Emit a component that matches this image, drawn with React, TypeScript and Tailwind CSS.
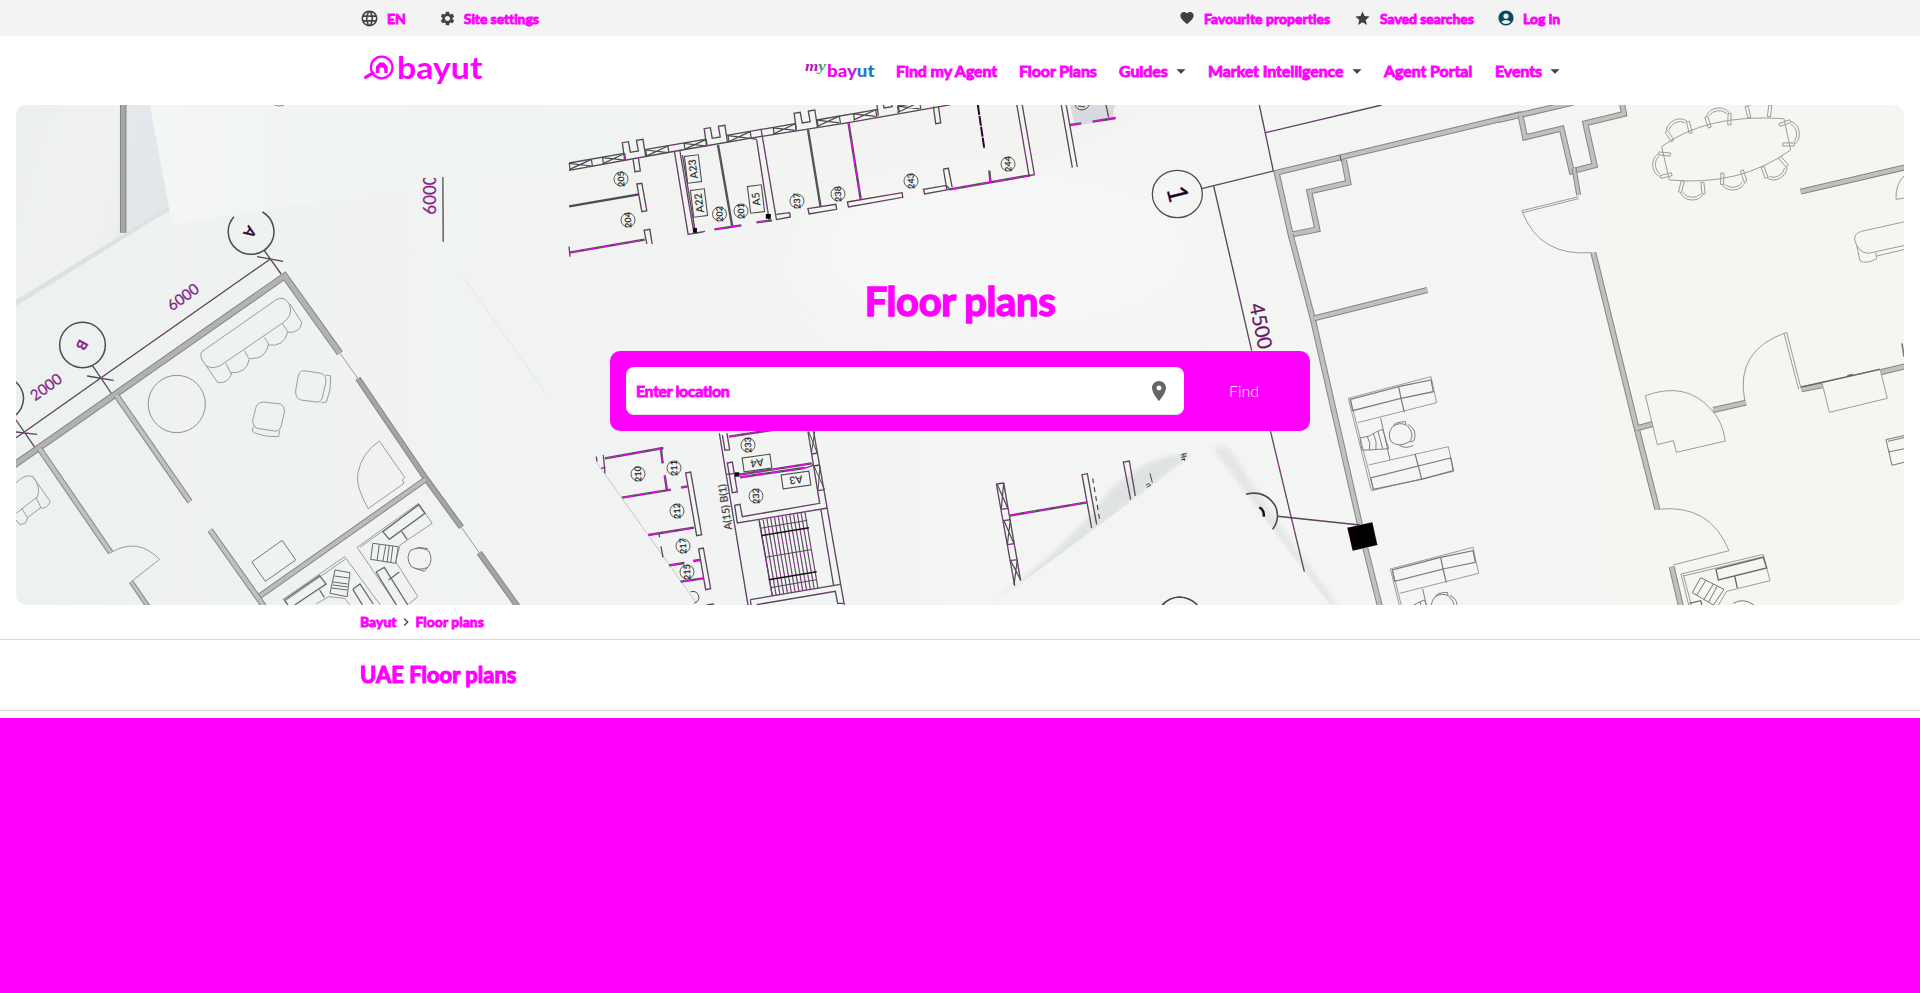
import React from "react";
import {
  MdAccountCircle,
  MdArrowDropDown,
  MdChevronRight,
  MdFavorite,
  MdLanguage,
  MdLocationOn,
  MdSettings,
  MdStar,
} from "react-icons/md";

const INK = "#4a4d4c";
const PINK = "#ff00ff";

/* ---------- drawing helpers ---------- */

function Wall({ d, w = 6, fill = "#bfc1bf" }: { d: string; w?: number; fill?: string }) {
  return (
    <>
      <path d={d} stroke="#858785" strokeWidth={w} />
      <path d={d} stroke={fill} strokeWidth={w - 2} />
    </>
  );
}

function Dim({ d, w = 1.3, dash = "1.5 7" }: { d: string; w?: number; dash?: string }) {
  return (
    <>
      <path d={d} stroke={INK} strokeWidth={w} />
      <path d={d} stroke={PINK} strokeWidth={w * 0.8} strokeDasharray={dash} opacity="0.6" />
    </>
  );
}

function Hot({ d }: { d: string }) {
  return (
    <>
      <path d={d} stroke={INK} strokeWidth={2.4} />
      <path d={d} stroke={PINK} strokeWidth={1.1} strokeDasharray="12 3" />
    </>
  );
}

function Thin({ d, c = "#999d9b", w = 1, fill = "none" }: { d: string; c?: string; w?: number; fill?: string }) {
  return <path d={d} stroke={c} strokeWidth={w} fill={fill} />;
}

function Room({ x, y, t, a = -92 }: { x: number; y: number; t: string; a?: number }) {
  return (
    <g transform={`translate(${x} ${y}) rotate(${a})`}>
      <circle r="7" stroke={INK} strokeWidth="0.9" />
      <text textAnchor="middle" y="3.2" fontSize="9" fill="#333" stroke="none">
        {t}
      </text>
    </g>
  );
}

function Tag({ x, y, t, a, w }: { x: number; y: number; t: string; a: number; w: number }) {
  return (
    <g transform={`translate(${x} ${y}) rotate(${a})`}>
      <rect x={-w / 2} y="-7" width={w} height="14" stroke={INK} strokeWidth="1.1" />
      <text textAnchor="middle" y="3.8" fontSize="10.5" fill="#333" stroke="none" fontWeight="600">
        {t}
      </text>
    </g>
  );
}

function Label({ x, y, t, a, s, c = "#a010a0", b = 400 }: { x: number; y: number; t: string; a: number; s: number; c?: string; b?: number }) {
  return (
    <text transform={`translate(${x} ${y}) rotate(${a})`} textAnchor="middle" y={s * 0.36} fontSize={s} fontWeight={b} fill={c} stroke={INK} strokeWidth="0.25">
      {t}
    </text>
  );
}

function Seat({ x, y, r }: { x: number; y: number; r: number }) {
  return (
    <g transform={`translate(${x} ${y}) rotate(${r})`}>
      <Thin d="M-34,26 L-40,-8 L-31,-10 L-25,24 Z M34,26 L40,-8 L31,-10 L25,24 Z M-34,-12 Q-22,-30 0,-30 Q22,-30 34,-12 M-27,-10 Q-16,-22 0,-22 Q16,-22 27,-10" />
    </g>
  );
}

function Desk({ x, y }: { x: number; y: number }) {
  return (
    <g transform={`translate(${x} ${y})`}>
      <Thin d="M-3,5 L245,-60 L262,18 L25,78 M-3,5 L66,282 L313,224 L297,150 L58,205 M3,8 L72,278" />
      <Thin d="M10,42 L3,8 L148,-30 L155,5 Z M155,5 L252,-15 L245,-50 L148,-30 M155,5 L165,46" c="#777b79" w={1.2} />
      <Thin d="M72,278 L64,244 L207,208 L217,248 Z M207,208 L304,184 L312,222 L217,248 M207,208 L197,172" c="#777b79" w={1.2} />
      <Thin d="M94,64 L122,190 M32,124 L60,118 L80,106 L100,98 L118,156 L60,160 L38,160 Z M54,120 Q66,140 60,160 M72,110 Q84,136 80,158 M86,104 L100,156" c="#808080" />
      <Thin d="M130,90 Q150,74 172,86 Q198,110 182,134 Q150,154 126,136 Q112,112 130,90 M132,88 Q136,76 168,75 L170,84 M150,146 Q170,158 192,146 M176,84 Q206,98 194,132 L182,136" c="#808080" />
    </g>
  );
}

/* ---------- drawing sections ---------- */

function PaperLayers() {
  return (
    <g stroke="none">
      <polygon points="16,105 153,105 171,205 16,303" fill="url(#sheetLeft)" />
      <polygon points="16,300 171,205 171,209 16,306" fill="#dde1e0" />
      <polygon points="125,105 150,105 170,212 127,232" fill="#dfe3e8" opacity="0.6" />
      <polygon points="150,105 700,105 640,150 172,225" fill="url(#sheetTop)" />
      <polygon points="450,255 490,255 547,395" fill="#f0f2f1" opacity="0.8" />
      <path d="M462 275 L547 395" stroke="#e2e6e5" strokeWidth="1" />
      <polygon points="569,165 900,105 1135,105 1135,118 1020,177 569,257" fill="#f2f2f0" opacity="0.8" />
      <ellipse cx="1000" cy="250" rx="200" ry="80" fill="#f8f8f8" opacity="0.7" filter="url(#wide)" />
      <polygon points="1070,105 1115,105 1112,120 1075,126" fill="#d9dadf" />
      <path d="M990 604 Q1070 545 1110 490 Q1150 452 1192 455 Q1130 502 1060 560 Z" fill="#d7dbda" opacity="0.7" filter="url(#soft)" />
      <path d="M1212 448 L1228 446 L1290 540 L1338 605 L1328 605 L1260 512 Z" fill="#dde0df" opacity="0.7" filter="url(#soft)" />
      <polygon points="992,605 1190,458 1215,455 1330,605" fill="#f3f5f5" />
    </g>
  );
}

function LeftRooms() {
  return (
    <g transform="translate(0 100) scale(0.357143 0.333333)">
      <Wall d="M345,10 L345,398" w={6.5} fill="#a6a7aa" />
      <Dim d="M1240,232 L1241,425" dash="1 12" />
      <Dim d="M45,1013 L67,997 L282,834 L757,477" />
      <Dim d="M739,450 L787,522 M720,470 L793,484 M259,797 L313,882 M244,828 L318,841 M45,960 L98,1043 M45,996 L104,1003" dash="2 12" />
      <path d="M735,336 A64,68 0 1 1 655,350" stroke={INK} strokeWidth="1.5" />
      <ellipse cx="231" cy="735" rx="64" ry="68" stroke={INK} strokeWidth="1.5" />
      <path d="M45,846 Q66,868 66,895 Q65,925 45,945" stroke={INK} strokeWidth="1.5" />
      <Wall d="M40,1095 L797,528 L952,760" w={7} fill="#b0b3b1" />
      <Wall d="M1002,835 L1192,1135 L1292,1282" fill="#a3a6a4" />
      <Wall d="M1342,1358 L1450,1520" fill="#a3a6a4" />
      <Wall d="M1192,1138 L725,1490" fill="#b9bcba" />
      <Thin d="M952,760 L1002,835 M1292,1282 L1342,1358" />
      <Wall d="M325,885 L532,1205" />
      <Wall d="M110,1045 L310,1358" />
      <Wall d="M588,1290 L740,1520" />
      <Wall d="M367,1445 L415,1520" w={5} />
      <Thin d="M310,1358 Q385,1310 447,1378 L367,1445" />
      <Thin d="M565,755 L775,598 Q800,586 812,618 Q820,650 790,670 L615,798 Q592,808 577,797 Q555,768 565,755 Z" />
      <Thin d="M577,797 L610,848 Q640,850 648,822 L632,790 M645,818 Q690,822 698,778 L684,752 M700,776 Q745,778 752,732 L740,712 M752,735 Q795,742 806,695 L790,670 M806,697 Q840,700 845,668 L812,612" />
      <ellipse cx="495" cy="912" rx="80" ry="86" stroke="#8f9391" />
      <Thin d="M850,812 L900,820 Q915,825 912,850 L902,895 Q898,908 885,906 L842,900 Q826,895 828,870 L835,830 Q838,812 850,812 Z M912,825 L926,828 Q928,870 914,906 L900,908" />
      <Thin d="M738,906 L785,912 Q798,918 796,938 L787,980 Q782,994 768,993 L720,985 Q706,978 708,958 L718,918 Q724,906 738,906 Z M710,980 Q702,995 715,1000 Q745,1012 780,1010 L783,992" />
      <Thin d="M1062,1023 L1133,1132 L1127,1140 L1131,1150 L1031,1226 Q995,1160 1002,1120 Q1012,1060 1062,1023 Z" />
      <Thin d="M705,1386 L790,1321 L828,1380 L743,1444 Z" c="#777" />
      <Thin d="M45,1148 Q72,1120 92,1130 Q115,1160 105,1190 L45,1240 M92,1130 L141,1205 Q130,1228 115,1224 L102,1194 M60,1224 L77,1253 L115,1222 M77,1253 Q75,1275 55,1273 L45,1260" />
      <Thin d="M1000,1342 L1172,1210 L1210,1270 L1120,1335 L1108,1385 L1170,1490 L1145,1512 M1000,1342 L1110,1515 M1008,1342 L1170,1218" />
      <Thin d="M1072,1295 L1172,1214 L1190,1240 L1090,1318 Z M1053,1416 L1076,1402 L1142,1515 M1053,1416 L1110,1515 M1125,1295 L1140,1318 M1088,1440 L1118,1416" c="#666a68" w={1.3} />
      <Thin d="M1044,1330 L1115,1340 L1108,1390 L1038,1378 Z M1062,1334 L1056,1380 M1080,1336 L1072,1384 M1090,1336 L1084,1386 M1100,1338 L1094,1388" c="#666a68" />
      <Thin d="M1150,1350 Q1175,1338 1200,1352 Q1215,1380 1198,1402 Q1170,1415 1150,1398 Q1135,1372 1150,1350 M1165,1348 L1170,1342 L1198,1346 M1160,1404 L1188,1414 L1196,1404" c="#777" />
      <Thin d="M790,1500 L965,1370 L1065,1515 M800,1502 L966,1378 M885,1512 L920,1490 L965,1495 L980,1515" />
      <Thin d="M796,1500 L895,1427 L913,1452 L825,1515 M796,1500 L806,1515 M988,1468 L1008,1452 L1045,1512 M988,1468 L1015,1515 M895,1470 L908,1492" c="#666a68" w={1.3} />
      <Thin d="M938,1410 L980,1418 L972,1490 L924,1480 Z M936,1428 L976,1434 M932,1446 L974,1452 M928,1464 L972,1470 M932,1455 L974,1461" c="#666a68" />
      <path d="M768,15 Q782,21 796,15" stroke="#888" />
    </g>
  );
}

const BRACKETS: [number, number][] = [[0, 0], [214, -42], [449, -88], [663, -133]];
const HATCHES = [50, 137, 250, 350, 465, 583, 698, 793, 908];

function TopPlan() {
  return (
    <g transform="translate(550 100) scale(0.382667 0.333333)">
      <Dim d="M50,189 L190,161 M248,149 L405,118 M462,106 L640,71 M697,60 L858,28 M910,18 L945,12 M50,211 L315,156 L345,150 L548,110 L780,68 L1048,14" dash="2 12" />
      {HATCHES.map((x) => (
        <Thin
          key={x}
          d={`M${x},${200 - x * 0.2} L${x + 58},${208 - x * 0.2} M${x},${219 - x * 0.2} L${x + 58},${188 - x * 0.2} M${x + 58},${187 - x * 0.2} L${x + 61},${209 - x * 0.2} M${x},${199 - x * 0.2} L${x + 3},${220 - x * 0.2}`}
          c={INK}
          w={1.2}
        />
      ))}
      {BRACKETS.map(([x, y]) => (
        <g key={x} transform={`translate(${x} ${y})`}>
          <Dim d="M195,180 L189,128 L205,125 L210,157 L231,153 L226,121 L243,118 L250,170" dash="2 14" />
        </g>
      ))}
      <Dim d="M217,178 L222,215 L236,213 L231,174 M1002,20 L1008,71 L1021,69 L1015,18" dash="1 9" />
      <Dim d="M227,252 L240,250 L253,332 L240,335 Z M253,432 L246,391 L261,388 L267,432" dash="2 12" />
      <path d="M50,319 L232,283" stroke={INK} strokeWidth="2.4" />
      <path d="M439,135 L476,378 M674,88 L707,320" stroke="#555" strokeWidth="2.4" />
      <Hot d="M50,458 L247,419 M780,68 L812,298 M430,388 L500,376 M540,367 L580,361 M1045,268 L1255,226 M1148,212 L1151,246 M1358,75 L1388,70 M1418,65 L1478,54" />
      <path d="M1118,15 L1135,146" stroke="#2d002d" strokeWidth="2" strokeDasharray="10 1" />
      <Dim d="M50,440 L52,470 M325,153 L361,403 L383,399 M339,150 L376,398 M346,165 L379,390 M383,399 L405,394 M540,120 L573,362 M552,90 L592,360 M540,118 L524,115" dash="2 5" />
      <path d="M374,384 l10,0 l0,14 l-10,0 z M564,342 l13,0 l0,14 l-13,0 z" fill="#000" />
      <Dim d="M592,343 L626,338 L628,351 L592,359 M674,326 L747,313 L749,328 L677,342 Z M777,306 L920,278 L922,292 L780,321 Z M976,268 L1036,256 L1045,268 L979,282 Z M1028,207 L1041,205 L1051,262 M1028,207 L1037,268" dash="2 9" />
      <Dim d="M1220,15 L1252,227 L1266,224 L1234,15 M1336,15 L1365,203 M1349,15 L1378,201 M1453,15 L1460,52" dash="2 9" />
    </g>
  );
}

function BottomPlan() {
  return (
    <g transform="translate(580 340) scale(0.333333)">
      <Thin d="M50,368 L350,790" c="#c4c8c6" />
      <Hot d="M75,355 L250,324 M126,473 L273,449 M205,585 L342,563 M267,676 L313,669 M302,725 L370,715 M243,328 L248,370 M254,406 L261,452 M303,443 L322,439 M340,663 L360,660 M447,290 L590,268" />
      <Dim d="M49,350 L51,365 M70,345 L75,400 M64,385 L77,382 M317,399 L332,396 L365,584 L350,587 Z M356,627 L370,624 L392,746 L377,749 Z M243,620 L249,652 M237,582 L239,592" dash="2 9" />
      <Dim d="M418,280 L504,795 M427,285 L435,331 L449,329 L441,280 M442,369 L457,366 L472,456 L457,458 Z M441,403 L466,400" dash="2 5" />
      <Hot d="M478,404 L695,370 M480,412 L672,384" />
      <path d="M465,397 h13 v13 h-13 z" fill="#000" />
      <Dim d="M684,275 L719,490 L487,530 L480,493 L464,496 L472,549 L743,504 M700,270 L793,795 M694,342 L714,339 M700,378 L720,375 M714,452 L734,449 M672,385 L695,378 L700,373" dash="2 6" />
      <Thin d="M686,275 L712,340 M704,275 L694,342 M702,378 L734,450 M720,378 L714,452" c={INK} />
      <Dim d="M723,510 L761,738 M537,541 L577,768 M511,779 L781,733 M530,794 L766,754 L773,790 L790,790 M511,779 L513,795 M380,795 L402,792" dash="2 7" />
      {[0, 1, 2, 3, 4, 5, 6, 7, 8, 9, 10, 11, 12].map((i) => (
        <Dim key={i} d={`M${538 + i * 11.4},${541 - i * 2} L${577 + i * 11.4},${768 - i * 2}`} dash="3 5" w={1.1} />
      ))}
      <Thin d="M540,565 L682,541 M556,652 L693,629 M572,743 L710,719" c={INK} />
      <path d="M544,587 L687,563 M566,719 L710,695" stroke="#111" strokeWidth="1.5" />
      <path d="M332,755 Q355,750 357,775 Q355,785 343,790" stroke={INK} />
    </g>
  );
}

function FoldPlan() {
  return (
    <g transform="translate(960 340) scale(0.333333)">
      <Dim d="M109,432 L131,429 L182,722 M109,432 L164,737 M122,508 L145,505 M130,542 L153,539 M142,614 L164,611 M150,662 L172,659" dash="2 5" />
      <Thin d="M112,434 L143,504 M131,430 L124,506 M132,542 L162,611 M151,540 L142,614 M152,662 L182,720 M172,660 L162,734" c={INK} w={1.2} />
      <Hot d="M148,527 L381,487" />
      <Dim d="M395,564 L366,404 L382,401 L410,553 M512,479 L490,366 L508,363 L526,468" dash="2 8" />
      <path d="M398,415 L420,545" stroke={INK} strokeWidth="1.2" strokeDasharray="5 4" />
      <path d="M570,400 L577,428 M558,435 Q570,428 572,436 L560,442" stroke={INK} />
      <path d="M662,345 L680,340 M664,352 L680,348 M664,360 L674,356 M670,340 L674,362" stroke={INK} strokeWidth="1.2" />
      <path d="M606,795 Q628,772 658,771 Q690,772 712,795" stroke={INK} strokeWidth="1.3" />
    </g>
  );
}

function CentreRightPlan() {
  return (
    <g transform="translate(1120 100) scale(0.333333)">
      <Dim d="M418,15 L460,213 L245,266 M437,98 L785,15 M281,258 L395,752 M451,992 L553,1415" />
      <ellipse cx="172" cy="282" rx="75" ry="71" stroke={INK} strokeWidth="1.3" />
      <Wall d="M1205,42 L470,218 L512,404 L592,388 L568,275 L685,248 L672,180" />
      <Wall d="M512,404 L578,655 L720,1275" />
      <Wall d="M582,655 L922,570" />
      <Wall d="M736,1345 L780,1520" />
      <Thin d="M660,165 L664,185" c="#555" />
      <Dim d="M472,1249 L720,1275" w={1.5} />
      <path d="M378,1183 Q435,1168 466,1218 Q482,1256 458,1288" stroke={INK} strokeWidth="1.6" />
      <path d="M418,1222 Q434,1230 431,1250" stroke="#111" strokeWidth="2.4" />
      <path d="M682,1283 L757,1267 L772,1335 L698,1352 Z" fill="#000" stroke={PINK} strokeWidth="0.8" strokeDasharray="1 5" />
      <Desk x={688} y={890} />
      <Desk x={814} y={1402} />
      <path d="M129,1515 Q148,1492 180,1491 Q212,1494 232,1515" stroke={INK} strokeWidth="1.2" />
    </g>
  );
}

function RightPlan() {
  return (
    <g transform="translate(1500 100) scale(0.333333)">
      <Wall d="M-5,60 L220,8" />
      <Wall d="M62,48 L75,112 L185,86 L215,214 L284,196 L256,70 L372,42 L366,10" />
      <Wall d="M222,204 L236,285" w={5} />
      <Thin d="M236,290 L66,332 L68,338 L236,296 M68,338 Q120,470 275,458" />
      <Wall d="M280,458 L410,985 L458,972" />
      <Wall d="M412,992 L472,1228" />
      <Thin d="M472,1228 Q630,1210 687,1352 L520,1395" />
      <Wall d="M515,1400 L543,1520" />
      <Thin d="M485,140 Q620,40 852,56 L872,150 Q720,260 508,240 Z" />
      <Seat x={535} y={88} r={-24} />
      <Seat x={655} y={54} r={-8} />
      <Seat x={776} y={26} r={-3} />
      <Seat x={868} y={100} r={80} />
      <Seat x={826} y={208} r={150} />
      <Seat x={700} y={240} r={172} />
      <Seat x={576} y={270} r={184} />
      <Seat x={488} y={195} r={-94} />
      <Wall d="M902,275 L1215,202" />
      <Thin d="M1215,365 L1085,394 Q1062,400 1064,420 Q1074,458 1105,460 L1215,436 M1070,436 L1080,482 Q1098,494 1130,476 L1127,458 M1130,468 L1215,448 M1215,225 Q1186,250 1188,298 L1215,294" />
      <Thin d="M436,887 Q560,842 635,930 Q668,965 676,1023 L529,1057 L520,1022 L472,1034 Z" />
      <Wall d="M640,930 L738,908" />
      <Thin d="M734,900 Q705,750 860,697 L903,865 M852,700 L896,868" />
      <Wall d="M904,868 L966,856" />
      <Thin d="M966,848 L1140,807 L1162,895 L988,937 Z" />
      <path d="M904,861 L1140,808 M1042,827 L1058,823" stroke="#666" strokeWidth="1.3" />
      <Wall d="M1144,816 L1215,799" />
      <path d="M1206,730 L1212,770" stroke="#777" strokeWidth="1.6" />
      <Thin d="M1215,1006 L1158,1019 L1176,1096 L1215,1086 M1165,1056 L1215,1046 M1215,1012 L1164,1024" c="#777" />
      <Thin d="M543,1422 L790,1363 L810,1442 L680,1474 L655,1515 M543,1422 L566,1515 M550,1424 L574,1515 M550,1428 L790,1370" />
      <Thin d="M648,1408 L790,1372 L800,1404 L655,1440 Z M704,1428 L712,1464 M568,1510 L602,1502 L606,1515" c="#666a68" w={1.3} />
      <Thin d="M602,1433 L672,1468 L640,1515 L577,1478 Z M618,1440 L590,1486 M640,1452 L612,1498 M652,1458 L626,1506 M700,1510 Q730,1492 762,1515" c="#777" />
    </g>
  );
}

function Blueprint() {
  return (
    <svg
      viewBox="16 105 1888 500"
      className="col-start-1 row-start-1 h-[500px] w-full font-['Lato',sans-serif] [&_path]:[vector-effect:non-scaling-stroke] [&_ellipse]:[vector-effect:non-scaling-stroke]"
      fill="none"
    >
      <defs>
        <linearGradient id="sheetLeft" x1="0" y1="0" x2="1" y2="0.4">
          <stop offset="0" stopColor="#eceff0" />
          <stop offset="0.6" stopColor="#f0f1f3" />
          <stop offset="1" stopColor="#e6eaec" />
        </linearGradient>
        <linearGradient id="sheetTop" x1="0" y1="0" x2="1" y2="0">
          <stop offset="0" stopColor="#f3f6f5" />
          <stop offset="0.5" stopColor="#eff3f2" />
          <stop offset="1" stopColor="#eff3f2" stopOpacity="0" />
        </linearGradient>
        <filter id="soft">
          <feGaussianBlur stdDeviation="2.5" />
        </filter>
        <filter id="wide" x="-30%" y="-50%" width="160%" height="200%">
          <feGaussianBlur stdDeviation="30" />
        </filter>
      </defs>
      <PaperLayers />
      <LeftRooms />
      <TopPlan />
      <BottomPlan />
      <FoldPlan />
      <CentreRightPlan />
      <RightPlan />
      <Room x={621} y={179} t="205" />
      <Room x={628} y={220} t="204" />
      <Room x={719.5} y={214} t="202" />
      <Room x={741} y={211} t="201" />
      <Room x={797} y={201} t="237" />
      <Room x={838} y={194} t="238" />
      <Room x={911} y={181} t="243" />
      <Room x={1008} y={164} t="244" />
      <path d="M1075 105 Q1077 110 1082 110 Q1088 109 1089 105 M1078 106 L1085 107" stroke={INK} />
      <Room x={748} y={445} t="233" />
      <Room x={638} y={474} t="210" />
      <Room x={674} y={468} t="211" />
      <Room x={677} y={511} t="212" />
      <Room x={683} y={546} t="217" />
      <Room x={687} y={572} t="215" />
      <Room x={756} y={496} t="232" />
      <Tag x={693} y={169} t="A23" a={-97} w={27} />
      <Tag x={699} y={203} t="A22" a={-97} w={27} />
      <Tag x={756} y={199} t="A5" a={-97} w={27} />
      <Tag x={757} y={463} t="A4" a={172} w={28} />
      <Tag x={796} y={480} t="A3" a={172} w={28} />
      <Label x={725} y={507} t="A(15) B(1)" a={-98} s={10.5} c="#333" />
      <Label x={183} y={297} t="6000" a={-36} s={15} />
      <Label x={46} y={387} t="2000" a={-36} s={15} />
      <svg x="415" y="178" width="30" height="50" overflow="hidden">
        <Label x={15} y={17} t="6000" a={-90} s={17} />
      </svg>
      <Label x={250} y={232} t="A" a={124} s={15} b={700} c="#300030" />
      <Label x={82} y={345} t="B" a={118} s={14} b={700} />
      <Label x={1178} y={194} t="1" a={76} s={28} b={400} c="#1e001e" />
      <Label x={1261} y={326} t="4500" a={78} s={20} c="#70106f" />
    </svg>
  );
}

/* ---------- page chrome ---------- */

function BayutLogo() {
  return (
    <svg width="122" height="44" viewBox="362 48 122 44" className="ml-0.5" fill="none">
      <circle cx="381.700" cy="66.500" r="10.800" stroke={PINK} strokeWidth="2.2" />
      <path d="M365.500 76.300 L373 72" stroke={PINK} strokeWidth="3.200" strokeLinecap="round" />
      <path d="M375.800 72 V65.500 L379.500 61.500 H384 L387.700 65.500 V72 H384.300 V69 Q384.300 66.500 381.800 66.500 Q379.200 66.500 379.200 69 V72 Z" fill={PINK} />
      <text x="397" y="78" fontSize="30" fontWeight="700" fill={PINK} textLength="85.500" lengthAdjust="spacingAndGlyphs">
        bayut
      </text>
    </svg>
  );
}

function MyBayutLogo() {
  return (
    <svg width="72" height="27" viewBox="803.500 57.500 72 27">
      <text x="804.500" y="71" fontSize="15" fontStyle="italic" fill="#b516b5" className="font-['Liberation_Serif',serif]" textLength="21" lengthAdjust="spacingAndGlyphs">
        m<tspan fill="#3f9a62">y</tspan>
      </text>
      <text x="826.500" y="77.500" fontSize="17.500" fontWeight="900" fill="#f000f0" textLength="47.500" lengthAdjust="spacingAndGlyphs">
        ba<tspan fill="#c020e0">y</tspan><tspan fill="#3d6fd0">u</tspan><tspan fill="#0c7fc2">t</tspan>
      </text>
    </svg>
  );
}

const heavy = "[-webkit-text-stroke:0.9px_#ff00ff]";

function NavItem({ label, width, caret }: { label: string; width: string; caret?: boolean }) {
  return (
    <a className={`flex items-center text-base tracking-[-0.1px] whitespace-nowrap ${width} ${heavy}`}>
      <span>{label}</span>
      {caret && <MdArrowDropDown className="-mr-[6px] ml-auto size-[22px] text-[#3f3f3f]" />}
    </a>
  );
}

export default function App() {
  return (
    <div className="flex h-[993px] w-full flex-col bg-white font-['Lato',sans-serif] font-bold text-[#ff00ff]">
      <div className="h-9 shrink-0 bg-[#f3f3f3]">
        <div className={`mx-auto flex h-full w-[1200px] items-center text-sm whitespace-nowrap ${heavy}`}>
          <MdLanguage className="size-[19px] text-[#444]" />
          <span className="ml-2 pt-[2px]">EN</span>
          <MdSettings className="ml-[33px] size-[17px] text-[#444]" />
          <span className="ml-2 pt-px tracking-[-0.1px]">Site settings</span>
          <MdFavorite className="ml-auto size-4 text-[#3f3f3f]" />
          <span className="ml-[9px] w-[127px] pt-[2px] tracking-[0.02px]">Favourite properties</span>
          <MdStar className="ml-[23px] size-[17px] text-[#3f3f3f]" />
          <span className="ml-[9px] w-[95px] pt-[2px] tracking-[-0.05px]">Saved searches</span>
          <MdAccountCircle className="ml-[22px] size-[18px] text-[#0b4a5c]" />
          <span className="ml-2 w-[37px] pt-[2px]">Log in</span>
        </div>
      </div>

      <header className="mx-auto flex h-[69px] w-[1200px] shrink-0 items-center">
        <BayutLogo />
        <nav className="ml-auto flex items-center">
          <MyBayutLogo />
          <div className="ml-5 flex items-center gap-[22px]">
            <NavItem label="Find my Agent" width="w-[101px]" />
            <NavItem label="Floor Plans" width="w-[78px]" />
            <NavItem label="Guides" width="w-[67px]" caret />
            <NavItem label="Market Intelligence" width="w-[154px]" caret />
            <NavItem label="Agent Portal" width="w-[89px]" />
            <NavItem label="Events" width="w-[65px]" caret />
          </div>
        </nav>
      </header>

      <main className="mx-4 grid h-[500px] shrink-0 overflow-hidden rounded-[10px] bg-linear-to-r from-[#edf1f0] via-[#f3f5f4] to-[#f5f6f1]">
        <Blueprint />
        <div className="z-10 col-start-1 row-start-1 flex flex-col items-center pt-[171px]">
          <h1 className="h-[75px] text-[40px] leading-[50px] tracking-[-0.4px] [-webkit-text-stroke:1.4px_#ff00ff]">Floor plans</h1>
          <form className="flex h-20 w-[700px] items-center gap-2.5 rounded-[10px] bg-[#ff00ff] px-4">
            <div className="flex h-12 w-[558px] items-center justify-between rounded-lg border-b border-[#ddd] bg-white pr-[13px] pl-2.5">
              <span className={`text-base tracking-[-0.4px] ${heavy}`}>Enter location</span>
              <MdLocationOn className="size-6 text-[#666]" />
            </div>
            <button type="button" className="h-12 w-[100px] text-base font-light text-white">
              Find
            </button>
          </form>
        </div>
      </main>

      <div className="h-[35px] shrink-0 border-b border-[#d8d8d8]">
        <div className={`mx-auto flex h-[34px] w-[1200px] items-center text-sm ${heavy}`}>
          <span className="w-9">Bayut</span>
          <MdChevronRight className="mr-[2px] ml-[1.5px] size-4 text-[#444]" />
          <span>Floor plans</span>
        </div>
      </div>
      <div className="h-[71px] shrink-0 border-b border-[#d8d8d8]">
        <h2 className="mx-auto w-[1200px] pt-5 text-[22px] leading-[30px] [-webkit-text-stroke:1.1px_#ff00ff]">UAE Floor plans</h2>
      </div>
      <section className="mt-[7px] grow bg-[#ff00ff]" />
    </div>
  );
}
